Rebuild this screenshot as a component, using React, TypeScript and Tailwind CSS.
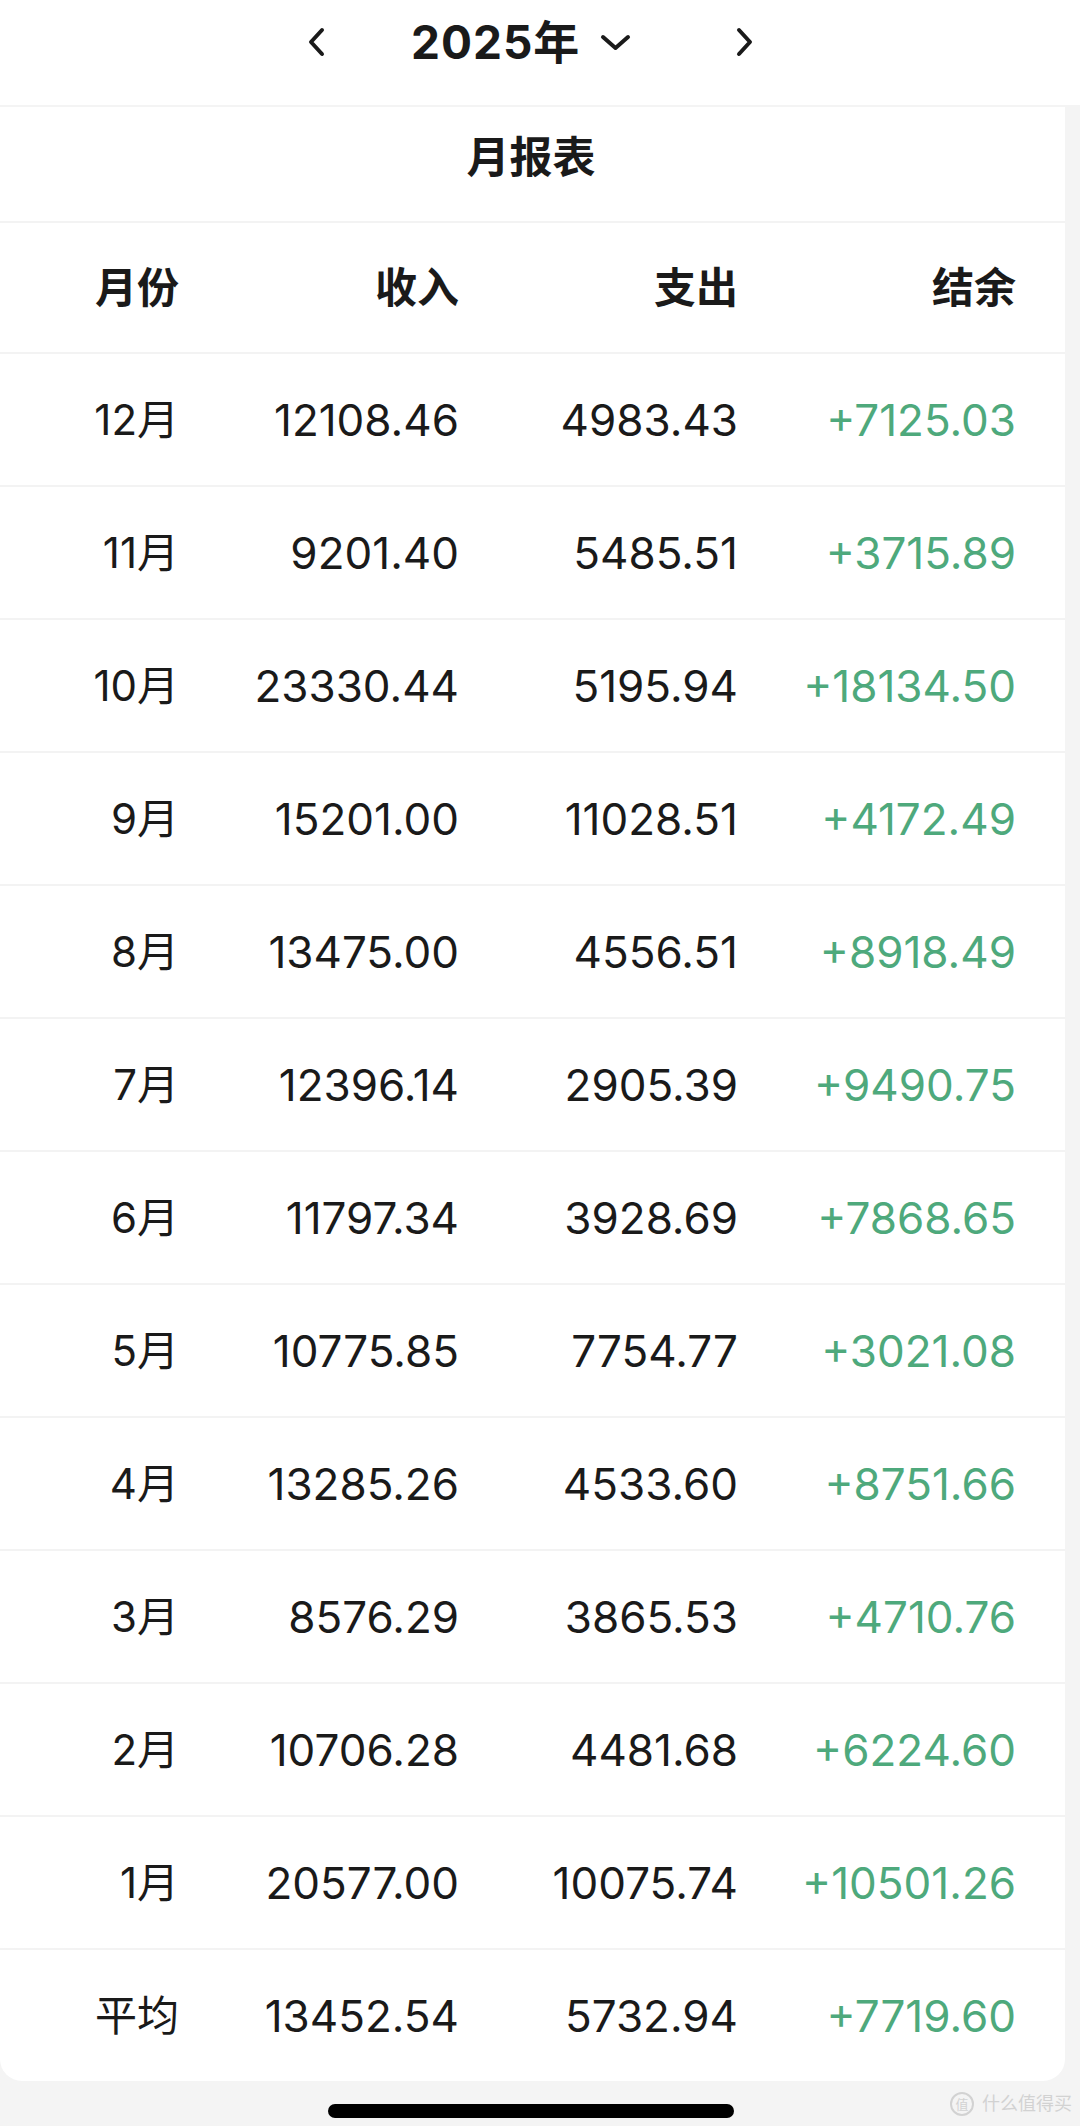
import React from 'react';

const ROWS: [string, string, string, string][] = [
  ['12月', '12108.46', '4983.43', '+7125.03'],
  ['11月', '9201.40', '5485.51', '+3715.89'],
  ['10月', '23330.44', '5195.94', '+18134.50'],
  ['9月', '15201.00', '11028.51', '+4172.49'],
  ['8月', '13475.00', '4556.51', '+8918.49'],
  ['7月', '12396.14', '2905.39', '+9490.75'],
  ['6月', '11797.34', '3928.69', '+7868.65'],
  ['5月', '10775.85', '7754.77', '+3021.08'],
  ['4月', '13285.26', '4533.60', '+8751.66'],
  ['3月', '8576.29', '3865.53', '+4710.76'],
  ['2月', '10706.28', '4481.68', '+6224.60'],
  ['1月', '20577.00', '10075.74', '+10501.26'],
  ['平均', '13452.54', '5732.94', '+7719.60'],
];

const FONT = { fontFamily: 'Inter, "Noto Sans CJK SC", sans-serif' };
const GRID = 'grid grid-cols-[179px_280px_279px_278px] items-center text-right pr-[49px] border-t-2 border-[#f3f3f3]';

export default function App() {
  return (
    <div className="relative w-[1080px] h-[2126px] overflow-hidden bg-[#f4f4f4] text-[#1a1a1a]" style={FONT}>
      {/* year switcher */}
      <div className="h-[105px] bg-white flex items-center pl-[307px] pb-[22px]">
        <svg width="18" height="30" viewBox="0 0 18 30" fill="none" stroke="#1a1a1a" strokeWidth="4" strokeLinecap="round" strokeLinejoin="round">
          <polyline points="15,3 4,15 15,27" />
        </svg>
        <span className="ml-[86px] text-[46px] font-bold leading-none tracking-[1px]">2025年</span>
        <svg className="ml-[20px] mt-[2px]" width="31" height="17" viewBox="0 0 31 17" fill="none" stroke="#1a1a1a" strokeWidth="4" strokeLinecap="round" strokeLinejoin="round">
          <polyline points="3,3 15.5,14 28,3" />
        </svg>
        <svg className="ml-[105px]" width="18" height="30" viewBox="0 0 18 30" fill="none" stroke="#1a1a1a" strokeWidth="4" strokeLinecap="round" strokeLinejoin="round">
          <polyline points="3,3 14,15 3,27" />
        </svg>
      </div>

      {/* report card */}
      <div className="mt-[2px] w-[1065px] bg-white rounded-b-[22px]">
        <div className="h-[114px] flex items-center justify-center pb-[14px] pr-[3px]">
          <span className="text-[43px] font-semibold">月报表</span>
        </div>
        <div className={`${GRID} h-[131px] text-[42px] font-semibold`}>
          <div>月份</div>
          <div>收入</div>
          <div>支出</div>
          <div>结余</div>
        </div>
        {ROWS.map((r) => (
          <div key={r[0]} className={`${GRID} h-[133px] text-[44px]`}>
            <div className="text-[42px]">{r[0]}</div>
            <div>{r[1]}</div>
            <div>{r[2]}</div>
            <div className="text-[#4ea97c]">{r[3]}</div>
          </div>
        ))}
      </div>

      {/* home indicator */}
      <div className="mt-[23px] ml-[328px] w-[406px] h-[14px] rounded-full bg-black" />

      {/* watermark */}
      <div className="absolute right-[8px] bottom-[10px] flex items-center gap-[8px] text-[#d2d2d2]">
        <div className="w-[24px] h-[24px] rounded-full border-2 border-[#d2d2d2] flex items-center justify-center text-[13px] leading-none">值</div>
        <span className="text-[18px] leading-none">什么值得买</span>
      </div>
    </div>
  );
}
